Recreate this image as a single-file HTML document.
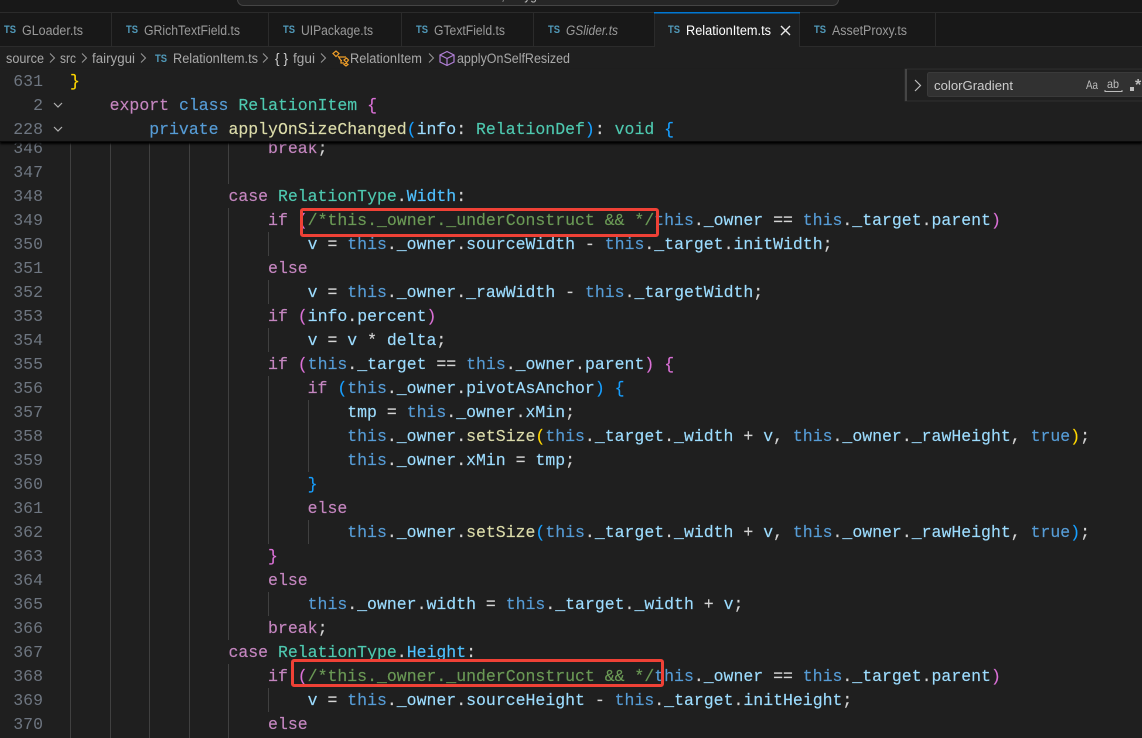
<!DOCTYPE html>
<html><head><meta charset="utf-8"><style>
html,body{margin:0;padding:0;background:#1f1f1f;overflow:hidden}
#r{position:relative;width:1142px;height:738px;overflow:hidden;background:#1f1f1f}
.l{position:absolute;left:70px;margin-top:1px;height:24px;line-height:24px;white-space:pre;font-family:"Liberation Mono",monospace;font-size:16.5px;color:#d4d4d4;-webkit-text-stroke:.15px}
.n{position:absolute;left:0;width:43px;margin-top:1px;text-align:right;height:24px;line-height:24px;font-family:"Liberation Mono",monospace;font-size:16.5px;color:#6e7681}
.g{position:absolute;width:1px;background:#404040}
.k{color:#c586c0}.b{color:#569cd6}.v{color:#9cdcfe}.t{color:#4ec9b0}.f{color:#dcdcaa}.c{color:#6a9955}.e{color:#4fc1ff}
.y{color:#ffd700}.p{color:#da70d6}.u{color:#179fff}
#s{position:absolute;left:0;top:69px;width:1142px;height:72px;background:#1f1f1f;box-shadow:0 2px 2px #000;border-bottom:1px solid #0a0a0a;box-sizing:content-box}
.box{position:absolute;box-sizing:border-box;border:3px solid #ef4136;border-radius:3px}
svg{position:absolute;left:0;top:0}
svg text{font-family:"Liberation Sans",sans-serif}
</style></head><body><div id="r">

<div class="g" style="left:70px;top:136px;height:602px"></div>
<div class="g" style="left:110px;top:136px;height:602px"></div>
<div class="g" style="left:149px;top:136px;height:602px"></div>
<div class="g" style="left:189px;top:136px;height:602px"></div>
<div class="g" style="left:228px;top:136px;height:48px"></div>
<div class="g" style="left:228px;top:208px;height:432px"></div>
<div class="g" style="left:228px;top:664px;height:74px"></div>
<div class="g" style="left:268px;top:232px;height:24px"></div>
<div class="g" style="left:268px;top:280px;height:24px"></div>
<div class="g" style="left:268px;top:328px;height:24px"></div>
<div class="g" style="left:268px;top:376px;height:168px"></div>
<div class="g" style="left:268px;top:592px;height:24px"></div>
<div class="g" style="left:268px;top:688px;height:24px"></div>
<div class="g" style="left:308px;top:400px;height:72px"></div>
<div class="g" style="left:308px;top:520px;height:24px"></div>

<div class="n" style="top:136px">346</div><div class="l" style="top:136px">                    <span class="k">break</span>;</div>
<div class="n" style="top:160px">347</div>
<div class="n" style="top:184px">348</div><div class="l" style="top:184px">                <span class="k">case</span> <span class="t">RelationType</span>.<span class="e">Width</span>:</div>
<div class="n" style="top:208px">349</div><div class="l" style="top:208px">                    <span class="k">if</span> <span class="p">(</span><span class="c">/*this._owner._underConstruct &amp;&amp; */</span><span class="b">this</span>.<span class="v">_owner</span> == <span class="b">this</span>.<span class="v">_target</span>.<span class="v">parent</span><span class="p">)</span></div>
<div class="n" style="top:232px">350</div><div class="l" style="top:232px">                        <span class="v">v</span> = <span class="b">this</span>.<span class="v">_owner</span>.<span class="v">sourceWidth</span> - <span class="b">this</span>.<span class="v">_target</span>.<span class="v">initWidth</span>;</div>
<div class="n" style="top:256px">351</div><div class="l" style="top:256px">                    <span class="k">else</span></div>
<div class="n" style="top:280px">352</div><div class="l" style="top:280px">                        <span class="v">v</span> = <span class="b">this</span>.<span class="v">_owner</span>.<span class="v">_rawWidth</span> - <span class="b">this</span>.<span class="v">_targetWidth</span>;</div>
<div class="n" style="top:304px">353</div><div class="l" style="top:304px">                    <span class="k">if</span> <span class="p">(</span><span class="v">info</span>.<span class="v">percent</span><span class="p">)</span></div>
<div class="n" style="top:328px">354</div><div class="l" style="top:328px">                        <span class="v">v</span> = <span class="v">v</span> * <span class="v">delta</span>;</div>
<div class="n" style="top:352px">355</div><div class="l" style="top:352px">                    <span class="k">if</span> <span class="p">(</span><span class="b">this</span>.<span class="v">_target</span> == <span class="b">this</span>.<span class="v">_owner</span>.<span class="v">parent</span><span class="p">)</span> <span class="p">{</span></div>
<div class="n" style="top:376px">356</div><div class="l" style="top:376px">                        <span class="k">if</span> <span class="u">(</span><span class="b">this</span>.<span class="v">_owner</span>.<span class="v">pivotAsAnchor</span><span class="u">)</span> <span class="u">{</span></div>
<div class="n" style="top:400px">357</div><div class="l" style="top:400px">                            <span class="v">tmp</span> = <span class="b">this</span>.<span class="v">_owner</span>.<span class="v">xMin</span>;</div>
<div class="n" style="top:424px">358</div><div class="l" style="top:424px">                            <span class="b">this</span>.<span class="v">_owner</span>.<span class="f">setSize</span><span class="y">(</span><span class="b">this</span>.<span class="v">_target</span>.<span class="v">_width</span> + <span class="v">v</span>, <span class="b">this</span>.<span class="v">_owner</span>.<span class="v">_rawHeight</span>, <span class="b">true</span><span class="y">)</span>;</div>
<div class="n" style="top:448px">359</div><div class="l" style="top:448px">                            <span class="b">this</span>.<span class="v">_owner</span>.<span class="v">xMin</span> = <span class="v">tmp</span>;</div>
<div class="n" style="top:472px">360</div><div class="l" style="top:472px">                        <span class="u">}</span></div>
<div class="n" style="top:496px">361</div><div class="l" style="top:496px">                        <span class="k">else</span></div>
<div class="n" style="top:520px">362</div><div class="l" style="top:520px">                            <span class="b">this</span>.<span class="v">_owner</span>.<span class="f">setSize</span><span class="u">(</span><span class="b">this</span>.<span class="v">_target</span>.<span class="v">_width</span> + <span class="v">v</span>, <span class="b">this</span>.<span class="v">_owner</span>.<span class="v">_rawHeight</span>, <span class="b">true</span><span class="u">)</span>;</div>
<div class="n" style="top:544px">363</div><div class="l" style="top:544px">                    <span class="p">}</span></div>
<div class="n" style="top:568px">364</div><div class="l" style="top:568px">                    <span class="k">else</span></div>
<div class="n" style="top:592px">365</div><div class="l" style="top:592px">                        <span class="b">this</span>.<span class="v">_owner</span>.<span class="v">width</span> = <span class="b">this</span>.<span class="v">_target</span>.<span class="v">_width</span> + <span class="v">v</span>;</div>
<div class="n" style="top:616px">366</div><div class="l" style="top:616px">                    <span class="k">break</span>;</div>
<div class="n" style="top:640px">367</div><div class="l" style="top:640px">                <span class="k">case</span> <span class="t">RelationType</span>.<span class="e">Height</span>:</div>
<div class="n" style="top:664px">368</div><div class="l" style="top:664px">                    <span class="k">if</span> <span class="p">(</span><span class="c">/*this._owner._underConstruct &amp;&amp; */</span><span class="b">this</span>.<span class="v">_owner</span> == <span class="b">this</span>.<span class="v">_target</span>.<span class="v">parent</span><span class="p">)</span></div>
<div class="n" style="top:688px">369</div><div class="l" style="top:688px">                        <span class="v">v</span> = <span class="b">this</span>.<span class="v">_owner</span>.<span class="v">sourceHeight</span> - <span class="b">this</span>.<span class="v">_target</span>.<span class="v">initHeight</span>;</div>
<div class="n" style="top:712px">370</div><div class="l" style="top:712px">                    <span class="k">else</span></div>

<div class="box" style="left:300px;top:208px;width:359px;height:29px"></div>
<div class="box" style="left:291px;top:659px;width:373px;height:28px;background:none"></div>

<div id="s"></div>
<div class="n" style="top:69px">631</div><div class="l" style="top:69px"><span class="y">}</span></div>
<div class="n" style="top:93px">2</div><div class="l" style="top:93px">    <span class="k">export</span> <span class="b">class</span> <span class="t">RelationItem</span> <span class="p">{</span></div>
<div class="n" style="top:117px">228</div><div class="l" style="top:117px">        <span class="b">private</span> <span class="f">applyOnSizeChanged</span><span class="u">(</span><span class="v">info</span>: <span class="t">RelationDef</span><span class="u">)</span>: <span class="t">void</span> <span class="u">{</span></div>

<svg width="1142" height="738" viewBox="0 0 1142 738" xmlns="http://www.w3.org/2000/svg">
<path d="M54 103l4 4 4-4M54 127l4 4 4-4" fill="none" stroke="#b0b0b0" stroke-width="1.2"/>

<rect x="0" y="0" width="1142" height="46" fill="#181818"/>
<rect x="237.5" y="-12" width="601" height="17.5" rx="6" fill="#262626" stroke="#454545"/>
<text x="466" y="0" font-size="13" fill="#bbb" textLength="80" lengthAdjust="spacingAndGlyphs">source, fairygui</text>
<rect x="0" y="12" width="1142" height="1" fill="#2b2b2b"/>
<rect x="0" y="46" width="1142" height="1" fill="#2b2b2b"/>
<path d="M111.5 12v34M268.5 12v34M401.5 12v34M533.5 12v34M654.5 12v34M799.5 12v34M935.5 12v34" stroke="#2b2b2b"/>
<rect x="655" y="13" width="144" height="34" fill="#1f1f1f"/>
<rect x="654" y="12" width="146" height="1.5" fill="#0078d4"/>

<g font-size="11" font-weight="bold" fill="#519aba">
<text x="4" y="33" textLength="12" lengthAdjust="spacingAndGlyphs">TS</text>
<text x="126" y="33" textLength="12" lengthAdjust="spacingAndGlyphs">TS</text>
<text x="283" y="33" textLength="12" lengthAdjust="spacingAndGlyphs">TS</text>
<text x="416" y="33" textLength="12" lengthAdjust="spacingAndGlyphs">TS</text>
<text x="548" y="33" textLength="12" lengthAdjust="spacingAndGlyphs">TS</text>
<text x="668" y="33" textLength="12" lengthAdjust="spacingAndGlyphs">TS</text>
<text x="814" y="33" textLength="12" lengthAdjust="spacingAndGlyphs">TS</text>
<text x="155" y="62" textLength="12" lengthAdjust="spacingAndGlyphs">TS</text>
</g>
<g font-size="13.5" fill="#9a9a9a">
<text x="22" y="35" textLength="61" lengthAdjust="spacingAndGlyphs">GLoader.ts</text>
<text x="144" y="35" textLength="96" lengthAdjust="spacingAndGlyphs">GRichTextField.ts</text>
<text x="301" y="35" textLength="72" lengthAdjust="spacingAndGlyphs">UIPackage.ts</text>
<text x="434" y="35" textLength="71" lengthAdjust="spacingAndGlyphs">GTextField.ts</text>
<text x="566" y="35" font-style="italic" textLength="52" lengthAdjust="spacingAndGlyphs">GSlider.ts</text>
<text x="686" y="35" fill="#ffffff" textLength="85" lengthAdjust="spacingAndGlyphs">RelationItem.ts</text>
<text x="832" y="35" textLength="75" lengthAdjust="spacingAndGlyphs">AssetProxy.ts</text>
</g>
<path d="M781 26l9 9M790 26l-9 9" stroke="#e8e8e8" stroke-width="1.4" fill="none"/>

<g font-size="13.5" fill="#a9a9a9">
<text x="6" y="63" textLength="38" lengthAdjust="spacingAndGlyphs">source</text>
<text x="60" y="63" textLength="16" lengthAdjust="spacingAndGlyphs">src</text>
<text x="92" y="63" textLength="43" lengthAdjust="spacingAndGlyphs">fairygui</text>
<text x="173" y="63" textLength="85" lengthAdjust="spacingAndGlyphs">RelationItem.ts</text>
<text x="275" y="63" fill="#d0d0d0" textLength="13" lengthAdjust="spacing">{}</text>
<text x="293" y="63" textLength="22" lengthAdjust="spacingAndGlyphs">fgui</text>
<text x="350" y="63" textLength="72" lengthAdjust="spacingAndGlyphs">RelationItem</text>
<text x="457" y="63" textLength="113" lengthAdjust="spacingAndGlyphs">applyOnSelfResized</text>
</g>
<path d="M50 53.500l4.500 4.500-4.500 4.500M82 53.500l4.500 4.500-4.500 4.500M141 53.500l4.500 4.500-4.500 4.500M263 53.500l4.500 4.500-4.500 4.500M321 53.500l4.500 4.500-4.500 4.500M429 53.500l4.500 4.500-4.500 4.500" fill="none" stroke="#9a9a9a" stroke-width="1"/>
<path d="M333 53.500l3-2.500 3 2.500-3 3zM339 57h5l2 0M338 56l3 4.500v2.500h3M341 60.500h1M344 60l2.500-2 2 2-2 2.500zM344 64.500l2-1.500 2 1.500-2 1.500z" fill="none" stroke="#ee9d28" stroke-width="1.2"/>
<path d="M447 51.500l7 3.500v7l-7 3.500-7-3.500v-7zM440 55l7 3.500 7-3.500M447 58.500v7" fill="none" stroke="#b180d7" stroke-width="1.2"/>

<rect x="905" y="69" width="240" height="32" fill="#202020" stroke="#2f2f2f"/>
<rect x="905" y="69" width="2" height="32" fill="#454545"/>
<path d="M915 80l5.500 5.500-5.500 5.500" fill="none" stroke="#bdbdbd" stroke-width="1.2"/>
<rect x="927.500" y="72.500" width="220" height="24" rx="2" fill="#313131" stroke="#3a3a3a"/>
<text x="934" y="90" font-size="13" fill="#cccccc" textLength="79" lengthAdjust="spacingAndGlyphs">colorGradient</text>
<text x="1086" y="89" font-size="12" fill="#bdbdbd" textLength="12" lengthAdjust="spacingAndGlyphs">Aa</text>
<text x="1107" y="88" font-size="12" fill="#bdbdbd" textLength="12" lengthAdjust="spacingAndGlyphs">ab</text>
<path d="M1105 90v1.500h17V90" fill="none" stroke="#bdbdbd"/>
<rect x="1130" y="87" width="4" height="4" fill="#bdbdbd"/>
<text x="1135" y="90" font-size="16" font-weight="bold" fill="#bdbdbd">*</text>
</svg>
</div></body></html>
